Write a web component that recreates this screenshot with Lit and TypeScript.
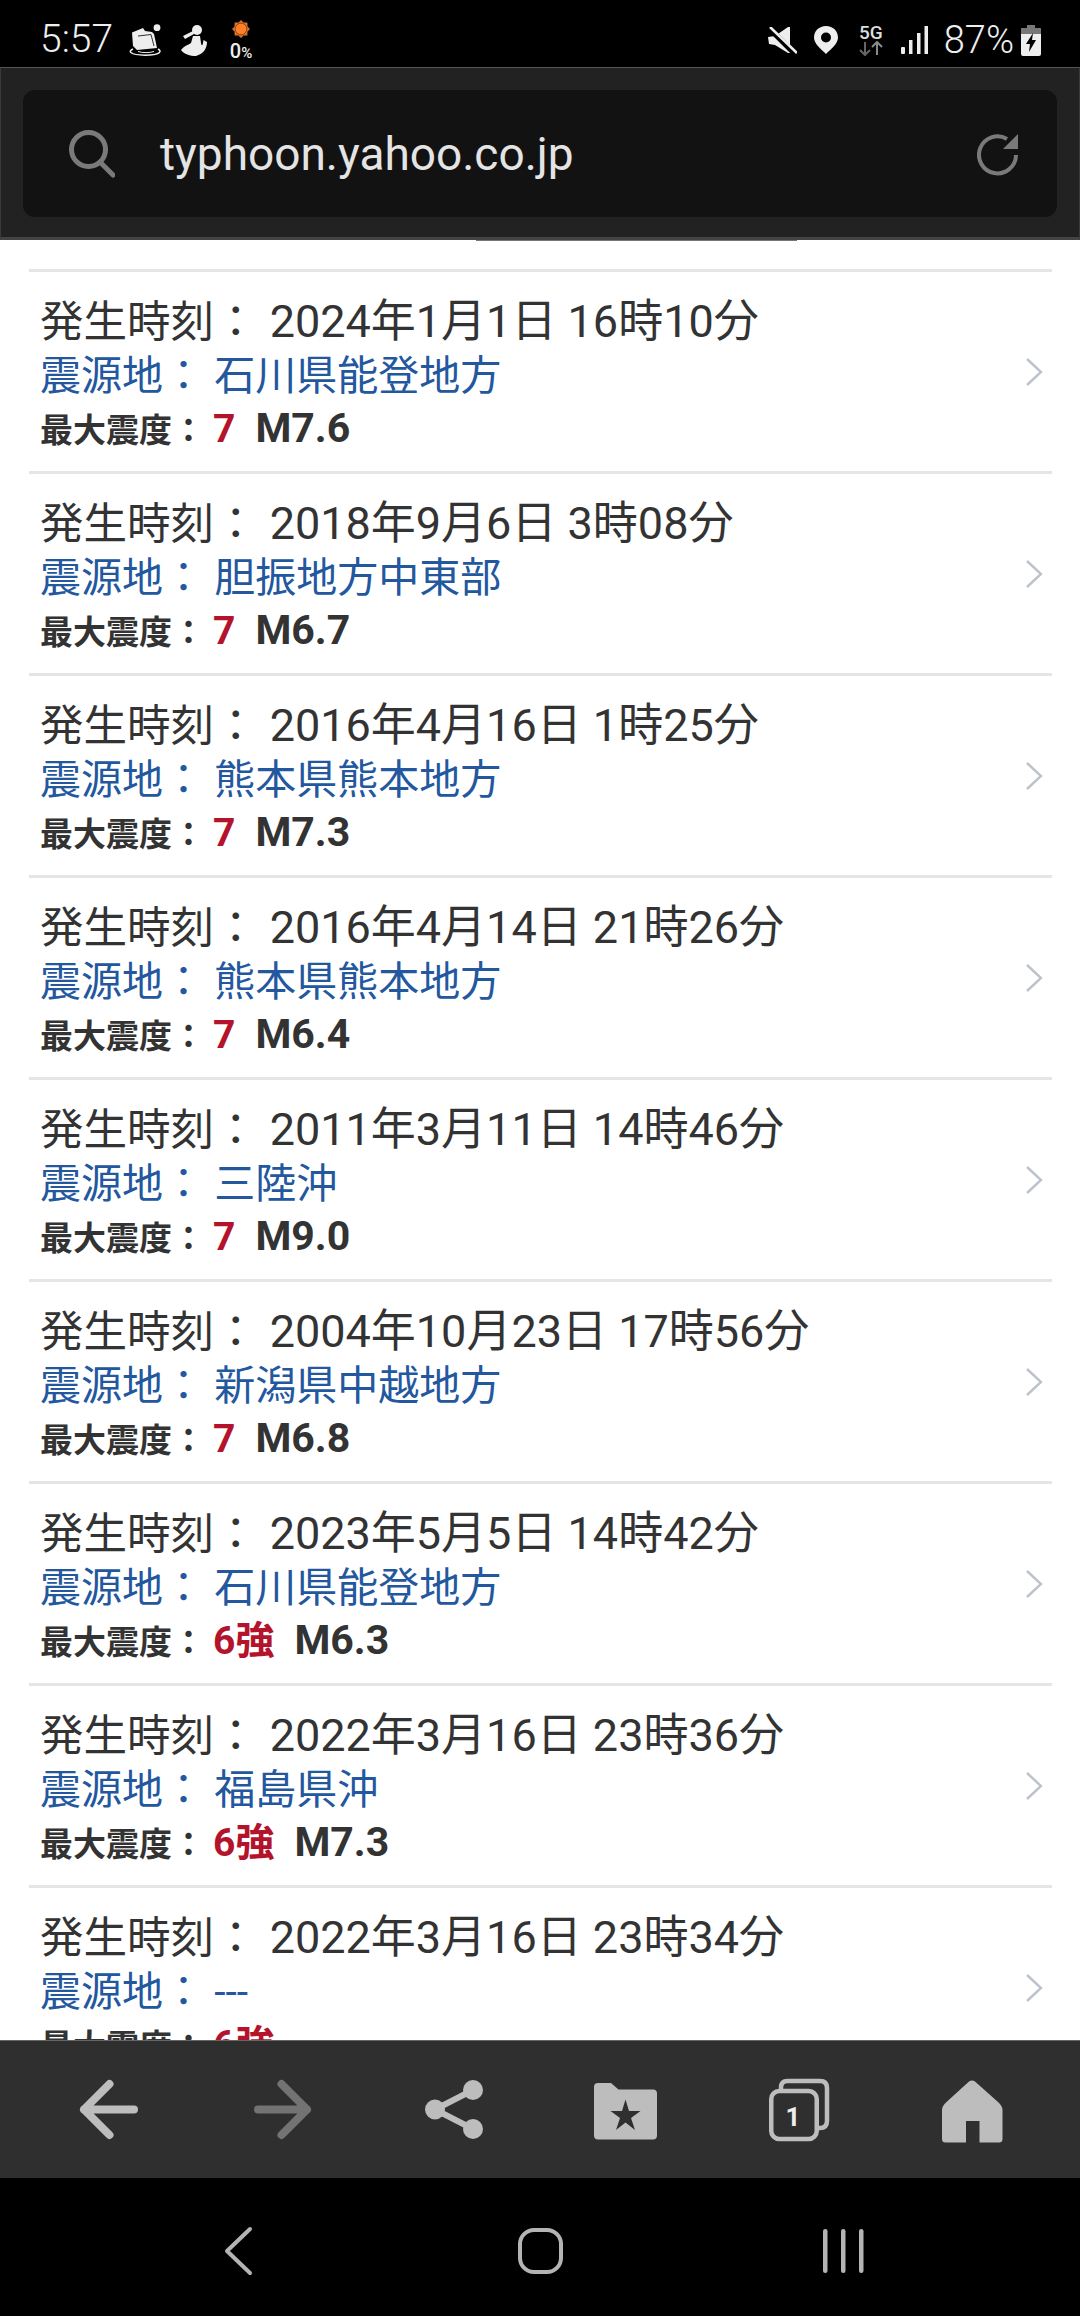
import { LitElement, html, css, svg } from 'lit';
import { customElement } from 'lit/decorators.js';

interface Quake {
  time: string;
  place: string;
  scale: string;
  mag: string;
}

const QUAKES: Quake[] = [
  { time: '2024年1月1日 16時10分', place: '石川県能登地方', scale: '7', mag: 'M7.6' },
  { time: '2018年9月6日 3時08分', place: '胆振地方中東部', scale: '7', mag: 'M6.7' },
  { time: '2016年4月16日 1時25分', place: '熊本県熊本地方', scale: '7', mag: 'M7.3' },
  { time: '2016年4月14日 21時26分', place: '熊本県熊本地方', scale: '7', mag: 'M6.4' },
  { time: '2011年3月11日 14時46分', place: '三陸沖', scale: '7', mag: 'M9.0' },
  { time: '2004年10月23日 17時56分', place: '新潟県中越地方', scale: '7', mag: 'M6.8' },
  { time: '2023年5月5日 14時42分', place: '石川県能登地方', scale: '6強', mag: 'M6.3' },
  { time: '2022年3月16日 23時36分', place: '福島県沖', scale: '6強', mag: 'M7.3' },
  { time: '2022年3月16日 23時34分', place: '---', scale: '6強', mag: '' },
];

const icon = (w: number, h: number, body: unknown) => html`<svg
  width=${w}
  height=${h}
  viewBox="0 0 ${w} ${h}"
  style="display:block;flex:none"
>
  ${body}
</svg>`;

@customElement('app-root')
export class AppRoot extends LitElement {
  static styles = css`
    :host {
      display: flex;
      flex-direction: column;
      width: 1080px;
      height: 2316px;
      overflow: hidden;
      background: #fff;
      font-family: Roboto, 'Noto Sans CJK JP', sans-serif;
    }
    .status {
      height: 67px;
      flex: none;
      background: #000;
      color: #eee;
      display: flex;
      align-items: center;
      padding: 13px 39px 0 40px;
      box-sizing: border-box;
    }
    .clock {
      font-size: 39px;
      font-weight: 300;
      line-height: 44px;
      margin-top: -3px;
      width: 89px;
      flex: none;
    }
    .status-left {
      display: flex;
      align-items: center;
    }
    .pct0 {
      display: flex;
      flex-direction: column;
      align-items: center;
      margin-top: 1px;
      width: 24px;
    }
    .pct0 span {
      font-size: 20px;
      font-weight: 500;
      line-height: 18px;
      margin-top: 4px;
      white-space: nowrap;
    }
    .pct0 small {
      font-size: 15px;
    }
    .status-right {
      margin-left: auto;
      display: flex;
      align-items: center;
    }
    .net {
      display: flex;
      flex-direction: column;
      align-items: center;
      width: 26px;
      margin-top: -1px;
    }
    .net span {
      font-size: 19px;
      font-weight: 500;
      line-height: 17px;
      color: #ddd;
    }
    .batt-text {
      font-size: 38px;
      font-weight: 300;
      margin: 0 7px 0 16px;
      line-height: 44px;
    }
    .toolbar {
      height: 173px;
      flex: none;
      box-sizing: border-box;
      background: #222;
      border: 1px solid #3a3a3a;
      border-top-color: #555;
      border-bottom: 3px solid #444;
      padding: 22px 22px 20px 22px;
    }
    .url-box {
      height: 127px;
      background: #121212;
      border-radius: 12px;
      display: flex;
      align-items: center;
      padding: 0 38px 0 46px;
    }
    .url {
      flex: 1;
      color: #e4e4e4;
      font-size: 46px;
      margin-left: 45px;
    }
    .content {
      flex: 1;
      min-height: 0;
      overflow: hidden;
      position: relative;
      padding: 29px 28px 0 29px;
    }
    .scrollbar {
      position: absolute;
      left: 476px;
      top: 0;
      width: 321px;
      height: 1px;
      background: #777;
    }
    .row {
      height: 202px;
      box-sizing: border-box;
      border-top: 3px solid #e5e5e5;
      display: flex;
      align-items: center;
      padding: 0 0 0 11px;
    }
    .texts {
      flex: 1;
      min-width: 0;
      align-self: flex-start;
      padding-top: 23px;
    }
    .time,
    .place {
      height: 54px;
      line-height: 54px;
      white-space: nowrap;
    }
    .meta {
      height: 50px;
      line-height: 50px;
      white-space: nowrap;
    }
    .time {
      font-size: 45px;
      color: #333;
    }
    .time-label {
      font-size: 43.5px;
      margin-right: 1px;
    }
    .place {
      font-size: 41px;
      color: #23589f;
    }
    .meta {
      font-size: 33px;
      font-weight: 700;
      color: #333;
    }
    .scale {
      font-size: 39px;
      color: #b4132c;
      margin-left: 8px;
    }
    .mag {
      font-size: 41px;
      margin-left: 20px;
    }
    .chev {
      margin-right: 7px;
    }
    .bottom {
      height: 138px;
      flex: none;
      box-sizing: border-box;
      background: #2f2f2f;
      border-top: 1px solid #666;
    }
    .bottom svg,
    .sysnav svg {
      display: block;
    }
    .sysnav {
      height: 138px;
      flex: none;
      background: #000;
    }
    .tab-num {
      font: 700 26px Roboto, sans-serif;
      fill: #eee;
    }
  `;

  private renderRow(q: Quake) {
    return html`<div class="row">
      <div class="texts">
        <div class="time"><span class="time-label">発生時刻：</span> ${q.time}</div>
        <div class="place">震源地： ${q.place}</div>
        <div class="meta">
          最大震度：<span class="scale">${q.scale}</span><span class="mag">${q.mag}</span>
        </div>
      </div>
      <div class="chev">
        ${icon(
          20,
          30,
          svg`<path d="M2 2 L16 15 L2 28" fill="none" stroke="#bcc3ca" stroke-width="2.4"/>`
        )}
      </div>
    </div>`;
  }

  render() {
    return html`
      <div class="status">
        <div class="clock">5:57</div>
        <div class="status-left">
          ${icon(
            33,
            32,
            svg`<circle cx="28" cy="3.7" r="3.4" fill="#eee"/>
              <path d="M3 8.5 L14 4 L16 7 L23 8 L25 10 L28 24 L8 26 L4 22 Z" fill="#eee"/>
              <path d="M9 12 L22 10.5 L25 22" stroke="#000" stroke-width="0.8" fill="none"/>
              <path d="M4 25 C-1 27 0 31 16 31.2 C32 31 33 27 29 25" fill="none" stroke="#eee" stroke-width="1.5"/>
              <path d="M9 27.5 C14 29 20 29 25 27.5" fill="none" stroke="#eee" stroke-width="1"/>`
          )}
          <div style="width:19px"></div>
          ${icon(
            26,
            31,
            svg`<circle cx="16" cy="5" r="5" fill="#eee"/>
              <path d="M2 11 L12 6 L13 9 L4 14 Z" fill="#eee"/>
              <path d="M12 11 L19 11 L20 18 C20.5 21 21.5 21 22 18 L22.5 15 L26 17 C26 24 22 29 15 31 C9 31 3 29 0 25 C3 21 7 20 10 18 Z" fill="#eee"/>`
          )}
          <div style="width:22px"></div>
          <div class="pct0">
            ${icon(
              18,
              18,
              svg`<path d="M9 0 L11.5 2.5 L15.4 2.6 L15.5 6.5 L18 9 L15.5 11.5 L15.4 15.4 L11.5 15.5 L9 18 L6.5 15.5 L2.6 15.4 L2.5 11.5 L0 9 L2.5 6.5 L2.6 2.6 L6.5 2.5 Z" fill="#d9722a"/>
                <circle cx="9" cy="9" r="5.8" fill="#ff7f2a" stroke="#6b3810" stroke-width="0.7"/>`
            )}
            <span>0<small>%</small></span>
          </div>
        </div>
        <div class="status-right">
          ${icon(
            29,
            27,
            svg`<path d="M0 10 L7 9 L20 0 L22 0 L22 26 L20 26 L7 18 L1 17 Z" fill="#eee"/>
              <path d="M0 0 L28 28" stroke="#000" stroke-width="5.5"/>
              <path d="M2 0 L29 26" stroke="#eee" stroke-width="2.6"/>`
          )}
          <div style="width:17px"></div>
          ${icon(
            24,
            28,
            svg`<path fill-rule="evenodd" d="M12 0 C5 0 0 5 0 11.5 C0 18 7 23 12 28 C17 23 24 18 24 11.5 C24 5 19 0 12 0 Z M12 6.5 A5 5 0 1 1 12 16.5 A5 5 0 1 1 12 6.5 Z" fill="#eee"/>`
          )}
          <div style="width:20px"></div>
          <div class="net">
            <span>5G</span>
            ${icon(
              24,
              15,
              svg`<path d="M6 1 V14 M1 9 L6 14 L11 9" stroke="#666" stroke-width="2" fill="none"/>
                <path d="M18 14 V1 M13 6 L18 1 L23 6" stroke="#8a8a8a" stroke-width="2" fill="none"/>`
            )}
          </div>
          <div style="width:17px"></div>
          ${icon(
            27,
            28,
            svg`<rect x="0" y="21" width="4" height="7" rx="1" fill="#eee"/>
              <rect x="8" y="14" width="3.5" height="14" fill="#eee"/>
              <rect x="16" y="7" width="3.5" height="21" fill="#eee"/>
              <rect x="23.5" y="0" width="3.5" height="28" fill="#eee"/>`
          )}
          <div class="batt-text">87%</div>
          ${icon(
            20,
            31,
            svg`<path d="M6 0 H14 V3 H18 Q20 3 20 5 V29 Q20 31 18 31 H2 Q0 31 0 29 V5 Q0 3 2 3 H6 Z" fill="#eee"/>
              <path d="M0 5 Q0 3 2 3 H6 V0 H14 V3 H18 Q20 3 20 5 V9 H0 Z" fill="#777"/>
              <path d="M12 8 L5 19 L9 19 L8 27 L15 15 L11 15 Z" fill="#000"/>`
          )}
        </div>
      </div>

      <div class="toolbar">
        <div class="url-box">
          ${icon(
            46,
            48,
            svg`<circle cx="19.5" cy="19.5" r="17" fill="none" stroke="#7a7a7a" stroke-width="5"/>
              <path d="M31 32 L44 45" stroke="#7a7a7a" stroke-width="5" stroke-linecap="round"/>`
          )}
          <div class="url">typhoon.yahoo.co.jp</div>
          ${icon(
            42,
            44,
            svg`<path d="M39 23 A18.5 18.5 0 1 1 30 7" fill="none" stroke="#7a7a7a" stroke-width="4"/>
              <path d="M41 2 V17 H26 Z" fill="#7a7a7a"/>`
          )}
        </div>
      </div>

      <div class="content">
        <div class="scrollbar"></div>
        ${QUAKES.map((q) => this.renderRow(q))}
      </div>

      <div class="bottom">
        <svg width="1080" height="137" viewBox="0 2041 1080 137">
          <g fill="none" stroke-linecap="round" stroke-linejoin="round" stroke-width="8">
            <path d="M134 2109.5 H84 M109.5 2084 L84 2109.5 L109.5 2135" stroke="#bdbdbd" />
            <path d="M258 2109.5 H307 M281.5 2084 L307 2109.5 L281.5 2135" stroke="#737373" />
            <path d="M473 2090 L435 2109.5 L473 2129" stroke="#bdbdbd" stroke-width="6" />
          </g>
          <g fill="#bdbdbd">
            <circle cx="473" cy="2090" r="10" />
            <circle cx="435" cy="2109.5" r="10" />
            <circle cx="473" cy="2129" r="10" />
            <path
              d="M594 2087 Q594 2083 598 2083 H611 L618.5 2089.5 H653 Q657 2089.5 657 2093.5 V2135.5 Q657 2139.5 653 2139.5 H598 Q594 2139.5 594 2135.5 Z"
            />
            <path
              d="M969 2081.5 Q972 2079.5 975 2081.5 L998 2102 Q1002.5 2106 1002.5 2110 V2139 Q1002.5 2142.5 999 2142.5 H979.5 V2121 H966 V2142.5 H945.5 Q942 2142.5 942 2139 V2110 Q942 2106 946.5 2102 Z"
            />
          </g>
          <path
            d="M625.5 2099.5 L629 2111 L640.5 2111 L631 2118 L635 2130 L625.5 2122.5 L616 2130 L620 2118 L610.5 2111 L622 2111 Z"
            fill="#2f2f2f"
          />
          <g fill="none" stroke="#bdbdbd" stroke-width="4.5">
            <rect x="771.25" y="2091" width="45.5" height="48" rx="8" />
            <path d="M781 2089 V2087.5 Q781 2081 787.5 2081 H820 Q827 2081 827 2088 V2121 Q827 2128 820 2128 H819" />
          </g>
          <text class="tab-num" x="793" y="2126" text-anchor="middle">1</text>
        </svg>
      </div>

      <div class="sysnav">
        <svg width="1080" height="138" viewBox="0 2178 1080 138">
          <g fill="none" stroke="#b4b4b4" stroke-linecap="round" stroke-linejoin="round">
            <path d="M250 2229 L227 2251 L250 2273" stroke-width="4" />
            <rect x="520" y="2230" width="41" height="42" rx="14" stroke-width="4" />
          </g>
          <g fill="#b4b4b4">
            <rect x="823" y="2229" width="4.5" height="44" rx="2.2" />
            <rect x="841" y="2229" width="4.5" height="44" rx="2.2" />
            <rect x="859" y="2229" width="4.5" height="44" rx="2.2" />
          </g>
        </svg>
      </div>
    `;
  }
}
